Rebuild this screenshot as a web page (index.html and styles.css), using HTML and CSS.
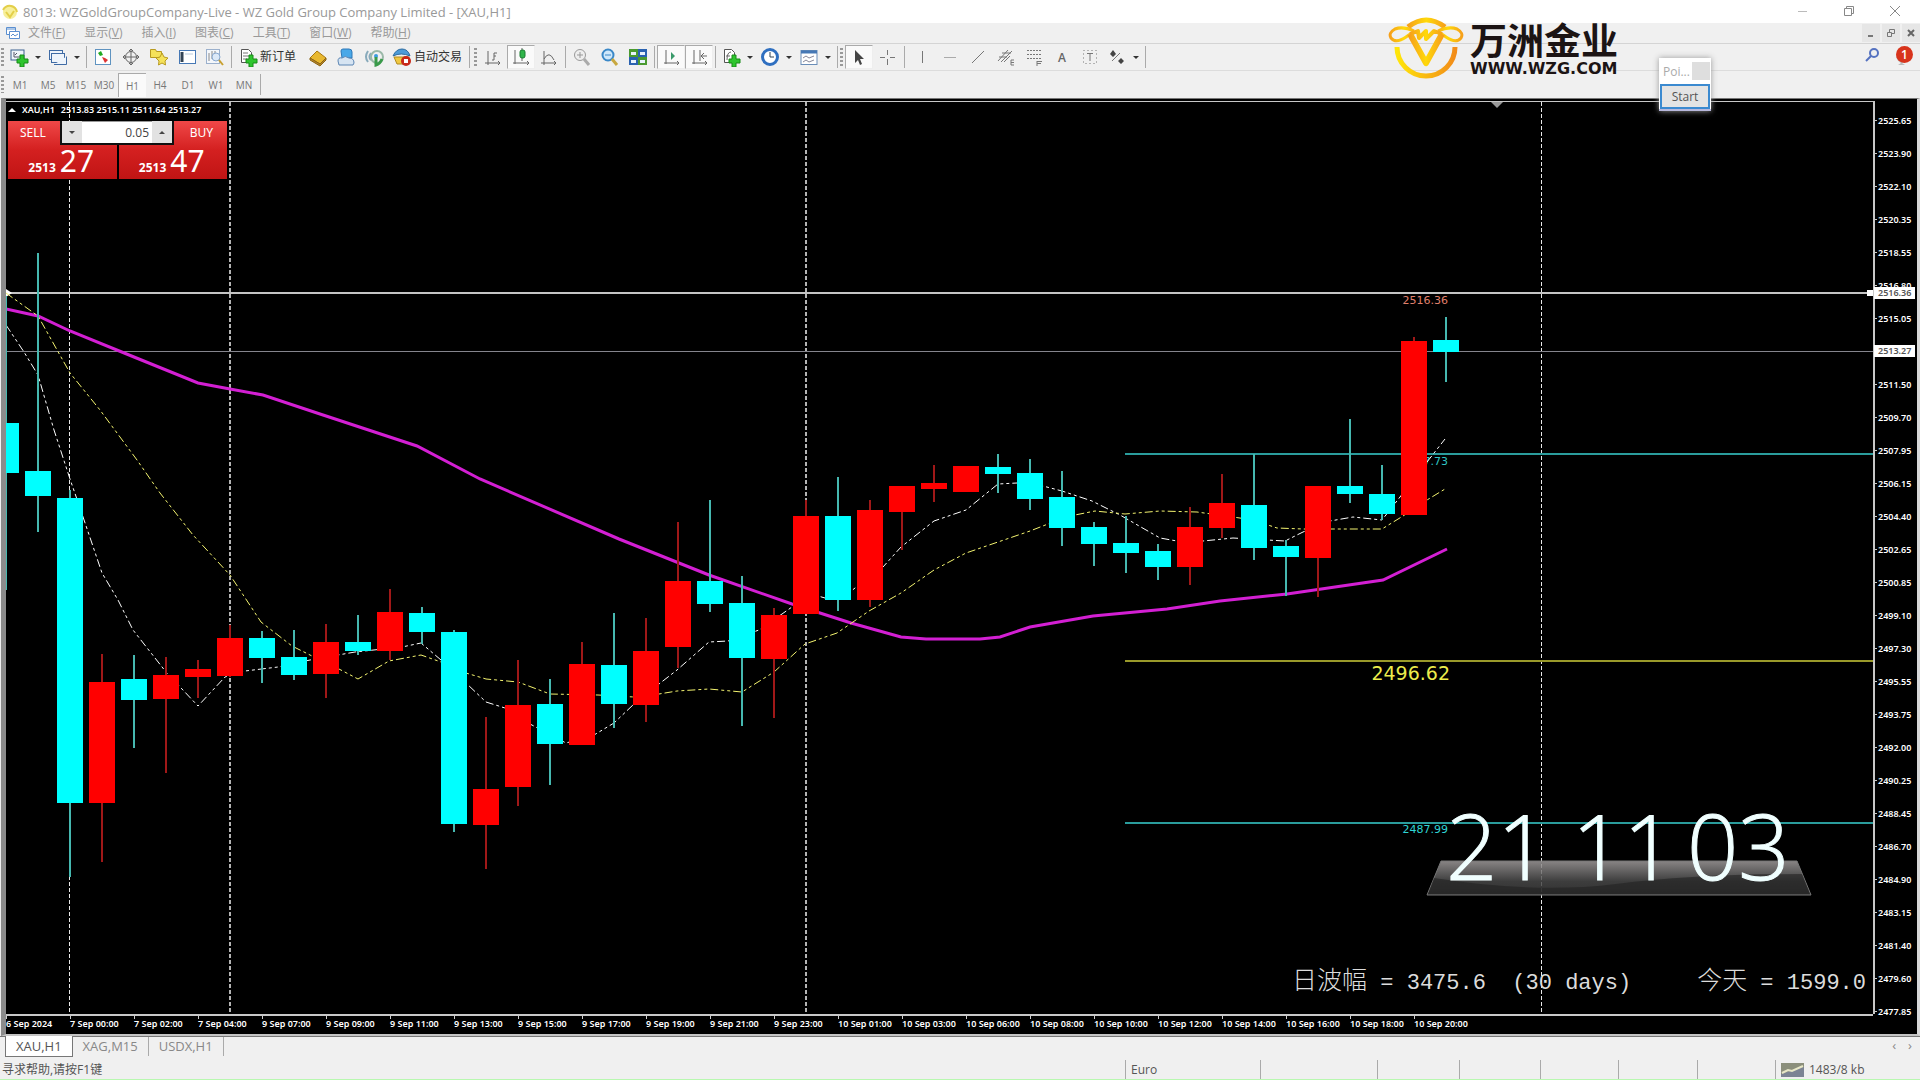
FILE: index.html
```html
<!DOCTYPE html>
<html lang="zh-CN">
<head>
<meta charset="utf-8">
<title>8013: WZGoldGroupCompany-Live - WZ Gold Group Company Limited - [XAU,H1]</title>
<link rel="stylesheet" href="styles.css">
</head>
<body>
<div class="app">
  <header class="titlebar">
    <svg class="app-icon" width="16" height="16" viewBox="0 0 16 16"><circle cx="8" cy="8" r="7" fill="#f7ef9a"/><path d="M1 6q3-5 8-4 5 1 6 6M4 8l4 5 4-6" fill="none" stroke="#e3cf4a" stroke-width="2"/></svg>
    <span class="title-text">8013: WZGoldGroupCompany-Live - WZ Gold Group Company Limited - [XAU,H1]</span>
    <div class="window-buttons">
      <button aria-label="Minimize"><svg width="12" height="12" viewBox="0 0 12 12"><path d="M1 6.500h9" stroke="#bbb"/></svg></button>
      <button aria-label="Restore"><svg width="12" height="12" viewBox="0 0 12 12" fill="none" stroke="#888"><path d="M1.500 3.500h7v7h-7zM3.500 3.500v-2h7v7h-2"/></svg></button>
      <button aria-label="Close"><svg width="12" height="12" viewBox="0 0 12 12"><path d="M1 1l10 10M11 1L1 11" stroke="#888"/></svg></button>
    </div>
  </header>

  <nav class="menubar">
    <svg class="menu-icon" width="16" height="16" viewBox="0 0 16 16" fill="#fff" stroke="#5b8fd0"><path d="M1.500 2.500h9v7h-9zM1 4h10"/><path d="M4.500 6.500h10v7h-10z"/><path d="M6 11l2-2 2 2 3-2" fill="none"/></svg>
    <button>文件(<u>F</u>)</button><button>显示(<u>V</u>)</button><button>插入(<u>I</u>)</button><button>图表(<u>C</u>)</button><button>工具(<u>T</u>)</button><button>窗口(<u>W</u>)</button><button>帮助(<u>H</u>)</button>
    <div class="mdi-buttons">
      <button aria-label="Minimize chart"><svg width="10" height="10" viewBox="0 0 10 10"><path d="M2 8h5" stroke="#777" stroke-width="2"/></svg></button>
      <button aria-label="Restore chart"><svg width="10" height="10" viewBox="0 0 10 10" fill="none" stroke="#777"><path d="M1.500 4.500h4v4h-4zM3.500 4v-2.500h5v4h-2.500"/></svg></button>
      <button aria-label="Close chart"><svg width="10" height="10" viewBox="0 0 10 10"><path d="M2 2l6 6M8 2L2 8" stroke="#666" stroke-width="2"/></svg></button>
    </div>
  </nav>

  <div class="toolbar">
    <i class="grip"></i>
    <button class="split" aria-label="New chart"><svg width="20" height="20" viewBox="0 0 20 20"><rect x="2" y="3" width="13" height="10" fill="#eef4fb" stroke="#3a618f"/><path d="M5 5v5h7M6 8l2-2" stroke="#556" fill="none"/><path d="M11 8h4v4h4v4h-4v4h-4v-4H8v-4h3z" fill="#2ec52e" stroke="#168a16"/></svg><b class="caret"></b></button>
    <button class="split" aria-label="Profiles"><svg width="20" height="20" viewBox="0 0 20 20" fill="#eef4fb" stroke="#3f6ba5"><rect x="1.500" y="3.500" width="13" height="9"/><rect x="3.500" y="6.500" width="13" height="9"/><path d="M6 17.500h12.500v-8"/></svg><b class="caret"></b></button>
    <i class="sep"></i>
    <button aria-label="Market watch"><svg width="20" height="20" viewBox="0 0 20 20"><rect x="2.500" y="2.500" width="15" height="15" fill="#fff" stroke="#5f93c0"/><path d="M5 6l3-2 2 4-3 1z" fill="#2a2"/><path d="M9 10l3 1 3 2-3 3z" fill="#d33"/></svg></button>
    <button aria-label="Data window"><svg width="20" height="20" viewBox="0 0 20 20" fill="none" stroke="#666"><circle cx="10" cy="10" r="5.500"/><path d="M10 2v16M2 10h16M8 4l2-2 2 2M8 16l2 2 2-2M4 8l-2 2 2 2M16 8l2 2-2 2"/></svg></button>
    <button aria-label="Navigator"><svg width="20" height="20" viewBox="0 0 20 20" fill="#f5e25a" stroke="#b89a20"><path d="M1.500 2.500h5l1 2h5v6h-11z"/><path d="M13 6l2 4 4 1-3 3 .5 4-3.500-2-3.500 2 .5-4-3-3 4-1z"/></svg></button>
    <button aria-label="Terminal"><svg width="20" height="20" viewBox="0 0 20 20"><rect x="2.500" y="3.500" width="16" height="13" fill="#fff" stroke="#4678b5"/><path d="M5 5v10" stroke="#345" stroke-width="3"/><path d="M8 7h8" stroke="#bcd" /></svg></button>
    <button aria-label="Strategy tester"><svg width="20" height="20" viewBox="0 0 20 20" fill="none"><rect x="1.500" y="2.500" width="13" height="14" fill="#f4f7fb" stroke="#9bb0cc"/><path d="M4 14V6M7 12V4M10 9V4" stroke="#888"/><circle cx="11" cy="10" r="4" stroke="#88a8d0" fill="#dce9f8"/><path d="M14 13l4 5" stroke="#c8a030" stroke-width="2"/></svg></button>
    <i class="sep"></i>
    <button class="labelled wide-order"><svg width="20" height="20" viewBox="0 0 20 20"><path d="M3.500 2.500h7l3 3v10h-10z" fill="#fff" stroke="#555"/><path d="M5 6h5M5 9h6M5 12h4" stroke="#777"/><path d="M11 8h4v4h4v4h-4v4h-4v-4H8v-4h3z" fill="#2ec52e" stroke="#168a16"/></svg><span>新订单</span></button>
    <button aria-label="MetaEditor"><svg width="20" height="20" viewBox="0 0 20 20"><path d="M2 11l7-7 9 7-6 6z" fill="#e8b830" stroke="#a87810"/><path d="M2 11v2l10 6 6-6v-2l-6 6z" fill="#b8862a" stroke="#8a6414"/></svg></button>
    <button aria-label="Account"><svg width="20" height="20" viewBox="0 0 20 20"><path d="M5 4q0-2 2-2h6q3 0 3 3v6H6z" fill="#49a8e8" stroke="#2f78b8"/><path d="M2 14q0-4 4-3 3-3 7 0 5 0 5 5l-1 2H3z" fill="#d6e4f2" stroke="#5c86b4"/></svg></button>
    <button aria-label="Signals"><svg width="20" height="20" viewBox="0 0 20 20" fill="none"><path d="M4 4q-4 6 0 11M7 6q-3 4 0 7" stroke="#8ab" stroke-width="2"/><circle cx="13" cy="10" r="6" stroke="#9ab8a8" stroke-width="2"/><circle cx="12" cy="9" r="2" fill="#3b9be0"/><path d="M12 10v8q4-1 6-6" stroke="#3a9a4a" stroke-width="3"/></svg></button>
    <button class="labelled wide-auto"><svg width="20" height="20" viewBox="0 0 20 20"><path d="M2 10h15l-2 7H5z" fill="#f0c840" stroke="#b08a20"/><path d="M1 9q8-4 17 0-2-7-8-7T1 9z" fill="#4d9bd8" stroke="#2d6ca0"/><circle cx="14" cy="14" r="5" fill="#c82818"/><rect x="12" y="12" width="4" height="4" fill="#fff"/></svg><span>自动交易</span></button>
    <i class="sep"></i><i class="grip"></i>
    <button aria-label="Bar chart"><svg width="20" height="20" viewBox="0 0 20 20" stroke="#666" fill="none"><path d="M5 4v14M2 16h15M15 14l2 2-2 2M9 13h2V6h3M11 9h2"/></svg></button>
    <button class="on" aria-label="Candlesticks"><svg width="20" height="20" viewBox="0 0 20 20" stroke="#666" fill="none"><path d="M4 3v14M2 16h16M16 14l2 2-2 2M11 1v13"/><rect x="9" y="3" width="5" height="8" rx="2" fill="#2fb44a" stroke="#1b7d30"/></svg></button>
    <button aria-label="Line chart"><svg width="20" height="20" viewBox="0 0 20 20" stroke="#666" fill="none"><path d="M5 4v14M2 16h15M15 14l2 2-2 2M5 12q5-9 10 1"/></svg></button>
    <i class="sep"></i>
    <button aria-label="Zoom in"><svg width="20" height="20" viewBox="0 0 20 20" fill="none" stroke="#999"><circle cx="8" cy="8" r="5.500" fill="#eee"/><path d="M5 8h6M8 5v6"/><path d="M12 12l5 6" stroke="#aaa" stroke-width="3"/></svg></button>
    <button aria-label="Zoom out"><svg width="20" height="20" viewBox="0 0 20 20" fill="none" stroke="#3a88c8"><circle cx="8" cy="8" r="5.500" fill="#cfe8fb" stroke-width="2"/><path d="M5 8h6"/><path d="M12 12l5 6" stroke="#c8a840" stroke-width="3"/></svg></button>
    <button aria-label="Tile windows"><svg width="20" height="20" viewBox="0 0 20 20"><path d="M1 2h9v8H1zM10 10h9v8h-9z" fill="#4a9a30"/><path d="M10 2h9v8h-9zM1 10h9v8H1z" fill="#2a62b0"/><path d="M3 5h5v3H3zM12 5h5v3h-5zM3 13h5v3H3zM12 13h5v3h-5z" fill="#e8f2fb"/></svg></button>
    <i class="sep"></i>
    <button class="on" aria-label="Auto scroll"><svg width="20" height="20" viewBox="0 0 20 20" stroke="#666" fill="none"><path d="M5 3v14M3 16h15M16 14l2 2-2 2"/><path d="M10 5l4 4-4 4z" fill="#3a9a6a" stroke="none"/></svg></button>
    <button class="on" aria-label="Chart shift"><svg width="20" height="20" viewBox="0 0 20 20" stroke="#666" fill="none"><path d="M5 3v14M3 16h15M16 14l2 2-2 2M11 3v11M12 9h6M15 6l-3 3 3 3"/></svg></button>
    <i class="sep"></i>
    <button class="split" aria-label="Indicators"><svg width="20" height="20" viewBox="0 0 20 20"><path d="M3.500 2.500h7l3 3v10h-10z" fill="#fff" stroke="#555"/><path d="M6 13q0-8 4-8M5 9h4" stroke="#666" fill="none"/><path d="M11 8h4v4h4v4h-4v4h-4v-4H8v-4h3z" fill="#2ec52e" stroke="#168a16"/></svg><b class="caret"></b></button>
    <button class="split" aria-label="Periods"><svg width="20" height="20" viewBox="0 0 20 20"><circle cx="10" cy="10" r="7.500" fill="#fff" stroke="#2f6fc0" stroke-width="3"/><path d="M10 5v5h4" stroke="#345" fill="none"/></svg><b class="caret"></b></button>
    <button class="split" aria-label="Templates"><svg width="20" height="20" viewBox="0 0 20 20" fill="none"><rect x="2" y="3.500" width="16" height="14" fill="#fff" stroke="#6a8db8"/><path d="M2 5h16" stroke="#4678b5" stroke-width="3"/><path d="M4 11l3-2 3 2 5-2M4 15l3-2 3 2 5-2" stroke="#889"/></svg><b class="caret"></b></button>
    <i class="sep"></i><i class="grip tight"></i>
    <button class="on" aria-label="Cursor"><svg width="20" height="20" viewBox="0 0 20 20"><path d="M6 3l9 9h-4l2 5-2 1-2-5-3 3z" fill="#444"/></svg></button>
    <button aria-label="Crosshair"><svg width="20" height="20" viewBox="0 0 20 20"><path d="M10.500 3v5M10.500 12v6M3 10.500h5M13 10.500h5" stroke="#777"/></svg></button>
    <i class="sep wide"></i>
    <button aria-label="Vertical line"><svg width="20" height="20" viewBox="0 0 20 20"><path d="M10.500 4v12" stroke="#777"/></svg></button>
    <button aria-label="Horizontal line"><svg width="20" height="20" viewBox="0 0 20 20"><path d="M4 10.500h12" stroke="#aaa"/></svg></button>
    <button aria-label="Trend line"><svg width="20" height="20" viewBox="0 0 20 20"><path d="M4 16L16 4" stroke="#777"/></svg></button>
    <button aria-label="Channel"><svg width="20" height="20" viewBox="0 0 20 20" stroke="#777" fill="none"><path d="M2 14L12 3M5 15L16 4M3 10h8M6 6h9M8 15l6-6M15 13h3M15 13v5h3M15 15.500h3"/></svg></button>
    <button aria-label="Fibonacci"><svg width="20" height="20" viewBox="0 0 20 20" stroke="#777" fill="none"><path d="M3 3.500h14M3 7.500h14M3 11.500h14" stroke-dasharray="2 1"/><path d="M13 14.500h5M13 14v5M13 16.500h4"/></svg></button>
    <button class="glyph" aria-label="Text">A</button>
    <button aria-label="Text label"><svg width="20" height="20" viewBox="0 0 20 20" stroke="#777" fill="none"><rect x="3.500" y="3.500" width="13" height="13" stroke-dasharray="1 3"/><path d="M7 6.500h6M10 6v8"/></svg></button>
    <button class="split" aria-label="Arrows"><svg width="20" height="20" viewBox="0 0 20 20" fill="#444"><path d="M3 7l3-4 3 4-3 3zM11 14l3-3 3 3-3 3z"/><path d="M5 14l8-8" stroke="#777"/></svg><b class="caret"></b></button>
    <i class="sep"></i>
    <div class="toolbar-right">
      <button aria-label="Search"><svg width="16" height="16" viewBox="0 0 16 16" fill="none" stroke="#5572c0" stroke-width="2"><circle cx="9" cy="6" r="4"/><path d="M6 9l-5 5"/></svg></button>
      <button class="alerts" aria-label="Notifications"><svg width="16" height="18" viewBox="0 0 16 18"><path d="M1 8q6 6 12 3-3 4-6 4l3 2H3l3-2Q2 13 1 8z" fill="#bbb"/></svg><span class="badge">1</span></button>
    </div>
  </div>

  <div class="timeframes">
    <i class="grip"></i>
    <button>M1</button><button>M5</button><button>M15</button><button>M30</button><button class="on">H1</button><button>H4</button><button>D1</button><button>W1</button><button>MN</button>
    <i class="sep"></i>
  </div>

  <main class="chart">
    <section class="plot">
      <svg class="plot-canvas" viewBox="6 102 1867 912" preserveAspectRatio="none">
        <path class="day-line thin" d="M69.500 102V1014M1541.500 102V1014"/>
        <path class="day-line" d="M230 102V1014M806 102V1014"/>
        <path class="line-high" d="M6 293H1873"/>
        <path class="line-price" d="M6 351.500H1873"/>
        <path class="line-cyan" d="M1125 454H1873M1125 823H1873"/>
        <path class="line-yellow" d="M1125 661H1873"/>
        <path d="M6 289l6 4-6 4zM1867 290h6v6h-6z" fill="#fff"/>
        <path d="M1491 102h12l-6 6z" fill="#999"/>
        <g class="level-text" text-anchor="end">
          <text x="1448" y="304" fill="#e0806c">2516.36</text>
          <text x="1448" y="465" fill="#2fc4c4">2507.73</text>
          <text x="1450" y="680" class="level-big">2496.62</text>
          <text x="1448" y="833" fill="#2fd4d4">2487.99</text>
        </g>
        <polyline class="ma-slow" points="6,309 38,316 70,331 134,357 198,383 230,389 263,395 320,414 417,446 480,479 619,539 709,575 792,604 851,623 901,637 926,639 980,639 1000,637 1030,627 1093,616 1167,609 1220,601 1287,594 1383,580 1447,549"/>
        <polyline class="ma-fast" points="6,325 24,352 38,375 54,430 70,479 80,508 102,573 118,600 133,630 166,672 198,706 225,677 245,671 278,667 310,660 355,652 402,647 421,643 441,660 466,683 486,702 505,708 530,724 566,743 594,735 614,723 634,704 659,684 677,670 709,642 728,641 759,630 782,614 792,607 818,596 825,598 850,592 855,588 883,567 901,547 934,521 966,510 998,484 1017,483 1043,486 1062,491 1092,501 1120,515 1160,538 1177,541 1203,541 1233,538 1267,540 1285,541 1303,532 1330,521 1353,517 1382,520 1400,497 1427,462 1445,439"/>
        <polyline class="ma-mid" points="6,293 38,316 70,373 100,410 137,460 160,493 193,535 230,575 261,622 292,646 314,657 339,669 358,679 389,661 421,655 441,662 466,673 486,679 518,682 550,694 598,695 634,697 659,694 677,691 709,689 742,692 774,672 805,644 837,633 869,611 901,593 934,570 966,553 998,542 1030,531 1048,524 1075,515 1095,511 1125,514 1160,511 1197,512 1233,517 1253,520 1277,528 1303,529 1382,529 1403,516 1427,500 1445,489"/>
        <g id="candles"></g>
      </svg>

      <div class="chart-title"><i class="collapse"></i><span>XAU,H1</span><span>2513.83 2515.11 2511.64 2513.27</span></div>

      <div class="trade">
        <button class="quote"><span class="side">SELL</span><span class="price"><small>2513</small>27</span></button>
        <button class="quote buy"><span class="side">BUY</span><span class="price"><small>2513</small>47</span></button>
        <div class="volume">
          <button aria-label="Decrease volume"><i class="down"></i></button>
          <input type="text" value="0.05" aria-label="Volume">
          <button aria-label="Increase volume"><i class="up"></i></button>
        </div>
      </div>

      <div class="clock">
        <svg class="clock-base" width="386" height="36" viewBox="0 0 386 36">
          <defs><linearGradient id="glass" x2="0" y2="1"><stop offset="0" stop-color="#a09c9c" stop-opacity=".85"/><stop offset=".6" stop-color="#484848" stop-opacity=".85"/><stop offset="1" stop-color="#3a3a3a" stop-opacity=".85"/></linearGradient></defs>
          <path d="M15 1H371L385 35H1z" fill="url(#glass)" stroke="#777"/>
          <path d="M8 18Q110 34 190 24T376 14L384 34H2z" fill="#222" opacity=".6"/>
        </svg>
        <time class="clock-digits"><span>21</span><span>11</span><span>03</span></time>
      </div>

      <p class="range"><span class="cjk">日波幅</span> = 3475.6  (30 days)     <span class="cjk">今天</span> = 1599.0</p>
    </section>

    <div class="price-axis">
      <ol id="prices"></ol>
      <output class="tag tag-high">2516.36</output>
      <output class="tag tag-price">2513.27</output>
    </div>
    <ol class="time-axis" id="times"></ol>
  </main>

  <nav class="tabs">
    <a class="current" href="#xau">XAU,H1</a><a href="#xag">XAG,M15</a><a href="#usdx">USDX,H1</a>
    <div class="tab-scroll"><button aria-label="Previous">‹</button><button aria-label="Next">›</button></div>
  </nav>

  <footer class="status">
    <span class="cell help">寻求帮助,请按F1键</span><span class="cell">Euro</span><span class="cell"></span><span class="cell"></span><span class="cell"></span><span class="cell"></span><span class="cell"></span><span class="cell"></span>
    <span class="cell"><svg width="23" height="14" viewBox="0 0 23 14"><path d="M0 0h23v14H0z" fill="#8b8f7c"/><path d="M0 14V11L23 4v10z" fill="#7c8494"/><path d="M1 10l6-3 4 1 11-5" stroke="#e8e8c8" stroke-width="2" fill="none"/></svg>1483/8 kb</span>
  </footer>

  <div class="brand">
    <svg width="76" height="62" viewBox="0 0 76 62" fill="none" stroke-linejoin="round">
      <defs><linearGradient id="gold"><stop offset="0" stop-color="#ffe60a"/><stop offset="1" stop-color="#f28c18"/></linearGradient>
      <linearGradient id="gold2"><stop offset="0" stop-color="#f6a01a"/><stop offset=".5" stop-color="#ffd90a"/><stop offset="1" stop-color="#f6a01a"/></linearGradient></defs>
      <path d="M20 10Q38-4 57 10" stroke="url(#gold2)" stroke-width="5"/>
      <path d="M9 30A29 29 0 0 0 67 30" stroke="url(#gold)" stroke-width="5"/>
      <path d="M26 14Q15 9 7 12Q0 16 3 21Q8 27 18 20Q24 15 30 15" stroke="url(#gold2)" stroke-width="3"/>
      <path d="M50 14Q61 9 69 12Q76 16 73 21Q68 27 58 20Q52 15 46 15" stroke="url(#gold2)" stroke-width="3"/>
      <path d="M22 17L38 46L54 17" stroke="url(#gold2)" stroke-width="6"/>
      <path d="M22 17L30 14L31 21L38 14L38 22L46 14L54 17" stroke="url(#gold2)" stroke-width="4"/>
    </svg>
    <div class="brand-text"><strong>万洲金业</strong><span>WWW.WZG.COM</span></div>
  </div>

  <aside class="pointer-window">
    <div class="pointer-title"><span>Poi...</span><i></i></div>
    <button>Start</button>
  </aside>
</div>
<script src="script.js"></script>
</body>
</html>
```
FILE: styles.css
```css
* { box-sizing: border-box; }
body { margin: 0; background: #f0f0f0; color: #555; font-family: "Open Sans", "Noto Sans CJK SC", sans-serif; font-size: 13px; }
button { margin: 0; padding: 0; border: 0; background: none; font: inherit; color: inherit; }
ol { list-style: none; margin: 0; padding: 0; }
.app { position: relative; display: flex; flex-direction: column; min-height: 100vh; }

.titlebar { display: flex; align-items: center; height: 23px; padding: 0 2px; background: #fff; color: #999; }
.app-icon { margin-right: 5px; }
.window-buttons { display: flex; margin-left: auto; padding-bottom: 2px; }
.window-buttons button { width: 46px; height: 20px; display: grid; place-items: center; }

.menubar { display: flex; align-items: center; height: 20px; padding-left: 5px; color: #999; font-size: 12px; }
.menu-icon { margin-right: 7px; }
.menubar > button { margin-right: 19px; line-height: 20px; }
.mdi-buttons { display: flex; gap: 2px; margin-left: auto; }
.mdi-buttons button { width: 18px; height: 18px; background: #e6e6e6; display: grid; place-items: center; }

.toolbar, .timeframes { display: flex; align-items: stretch; }
.toolbar { height: 28px; border-top: 1px solid #d4d4d4; border-bottom: 1px solid #dcdcdc; padding: 1px 0; color: #333; font-size: 12px; }
.toolbar > button { width: 28px; display: flex; align-items: center; justify-content: center; }
.toolbar > .split { width: 39px; justify-content: flex-start; padding-left: 3px; }
.toolbar > .labelled { justify-content: flex-start; gap: 2px; padding-left: 4px; white-space: nowrap; line-height: 20px; }
.toolbar > .wide-order { width: 70px; }
.toolbar > .wide-auto { width: 79px; }
.toolbar > .on { background: #fafafa; border: 1px solid #aaa; border-right-color: #eee; border-bottom-color: #eee; }
.toolbar > .glyph { font-weight: 600; color: #666; }
.caret { margin-left: 6px; border: 3px solid transparent; border-top: 3px solid #333; border-bottom: 0; }
.grip { width: 3px; margin: 3px 2px 3px 2px; background: repeating-linear-gradient(#999 0 2px, transparent 2px 4px); }
.timeframes .grip, .toolbar .grip:first-child { margin-left: 1px; }
.grip.tight { margin-left: 0; }
.sep { width: 1px; margin: 1px 2px; background: #aaa; }
.sep.wide { margin: 1px 3px; }
.toolbar-right { display: flex; align-items: center; gap: 14px; margin-left: auto; padding-right: 7px; }
.alerts { position: relative; width: 18px; display: flex; align-items: flex-end; }
.badge { position: absolute; top: -2px; right: 0; width: 17px; height: 17px; border-radius: 50%; background: #d8341c; color: #fff; font-size: 12px; line-height: 17px; font-weight: 600; }

.timeframes { height: 27px; padding: 2px 0; font-size: 10px; color: #777; }
.timeframes button { width: 28px; height: 24px; }
.timeframes .on { background: #fafafa; border: 1px solid #aaa; border-right: 0; border-bottom: 0; }

.chart { flex: 1; display: grid; grid-template-columns: 1fr 42px; grid-template-rows: 1fr 20px; margin: 0 0 0 1px; padding-top: 2px; border: solid #777; border-width: 1px 3px 2px 5px; border-color: #777 #d8d8d8 #c4c4c4 #8c8c8c; background: #000; color: #fff; font: 600 9px/12px "Noto Sans", sans-serif; }
.plot { position: relative; min-width: 0; border: solid #c8c8c8; border-width: 1px 2px 0 0; }
.plot-canvas { position: absolute; inset: 0; width: 100%; height: 100%; }
.day-line { stroke: #b4b4b4; stroke-width: 2; stroke-dasharray: 4 2; }
.day-line.thin { stroke: #e8e8e8; stroke-width: 1; }
.line-high { stroke: #c4c4c4; stroke-width: 2; }
.line-price { stroke: #85858d; }
.line-cyan { stroke: #2a9c9c; stroke-width: 2; }
.line-yellow { stroke: #99992a; stroke-width: 2; }
.level-text { font: 11px "DejaVu Sans", sans-serif; }
.level-big { font-size: 19px; fill: #ecec4c; }
.ma-slow, .ma-mid, .ma-fast { fill: none; }
.ma-slow { stroke: #d31fd3; stroke-width: 3; }
.ma-mid { stroke: #f4f470; stroke-dasharray: 8 3 3 3 3 3; }
.ma-fast { stroke: #fff; stroke-dasharray: 8 3 3 3 3 3; }
.bear-wick { stroke: #46b8b0; stroke-width: 2; }
.bull-wick { stroke: #a01818; stroke-width: 2; }
.bear-body { fill: #0ff; }
.bull-body { fill: #f00; }

.chart-title { position: absolute; top: 2px; left: 2px; display: flex; align-items: center; gap: 6px; }
.collapse { border: 4px solid transparent; border-bottom-color: #fff; border-top: 0; }

.trade { position: absolute; top: 19px; left: 2px; display: grid; grid-template-columns: 1fr 1fr; grid-template-rows: 58px; gap: 2px; width: 219px; }
.quote { display: flex; flex-direction: column; justify-content: space-between; padding: 3px 14px 2px 12px; background: linear-gradient(#f04848, #d42020 50%, #c01414); color: #fff; text-align: left; font-size: 12px; font-weight: 400; line-height: 18px; }
.quote.buy .side { align-self: flex-end; }
.quote .price { align-self: center; font-size: 30px; line-height: 32px; }
.quote small { margin-right: 4px; font-size: 12px; line-height: 12px; font-weight: 700; }
.volume { position: absolute; left: 52px; top: 0; width: 114px; height: 24px; display: grid; grid-template-columns: 20px 1fr 20px; border: solid #111; border-width: 0 2px 2px; background: #fff; }
.volume button { display: grid; place-items: center; background: #e2e2e2; }
.volume input { width: 100%; min-width: 0; margin: 0; padding: 0 3px; border: 0; border-top: 1px solid #999; background: #fff; color: #444; text-align: right; font: 12px "Open Sans", sans-serif; }
.up, .down { border: 3px solid transparent; }
.up { border-bottom-color: #444; border-top: 0; }
.down { border-top-color: #444; border-bottom: 0; }

.clock { position: absolute; right: 61px; bottom: 118px; width: 386px; height: 86px; }
.clock-base { position: absolute; left: 0; bottom: 0; }
.clock-digits { position: absolute; left: 20px; top: -15px; display: grid; grid-template-columns: 126px 115px auto; color: #f0ffff; font: 300 90px/100px "Open Sans", sans-serif; -webkit-text-stroke: 1px #f0ffff; }

.range { position: absolute; right: 7px; bottom: 15px; margin: 0; white-space: pre; color: #dcdcdc; font: 22px/30px "Liberation Mono", monospace; }
.cjk { font: 300 25px/30px "Noto Sans CJK SC", sans-serif; }

.price-axis { position: relative; grid-row: 1 / 3; grid-column: 2; }
.price-axis ol { display: flex; flex-direction: column; height: 100%; padding: 3px 0 6px; }
.price-axis li { flex: 1; display: flex; align-items: center; gap: 1px; }
.price-axis li::before { content: ""; width: 2px; height: 1px; background: #ccc; }
.tag { position: absolute; left: -1px; width: 41px; padding-left: 4px; background: #fff; color: #555; }
.tag-high { top: 186px; }
.tag-price { top: 244px; }
.time-axis { display: grid; grid-auto-flow: column; grid-auto-columns: 64px; justify-content: start; overflow: hidden; border-top: 2px solid #c8c8c8; margin-right: 2px; line-height: 16px; white-space: nowrap; }
.time-axis li { position: relative; }
.time-axis li::before { content: ""; position: absolute; left: 0; top: 0; width: 1px; height: 3px; background: #ccc; }

.tabs { display: flex; align-items: flex-start; height: 22px; padding-left: 5px; border-top: 1px solid #777; color: #888; line-height: 19px; }
.tabs a { padding: 0 10px; color: inherit; text-decoration: none; border-right: 1px solid #aaa; }
.tabs .current { margin-top: -1px; padding: 1px 10px 0; background: #fff; color: #555; border: 1px solid #777; border-top: 0; }
.tab-scroll { display: flex; gap: 12px; margin-left: auto; padding-right: 8px; }
.tab-scroll button { line-height: 16px; }

.status { display: grid; grid-template-columns: 1fr 135px 117px 82px 81px 78px 79px 78px 145px; height: 22px; padding-top: 2px; border-bottom: 1px solid #b8f8b0; line-height: 18px; font-size: 12px; }
.cell { display: flex; align-items: center; gap: 5px; padding-left: 5px; border-left: 1px solid #aaa; }
.cell.help { padding-left: 2px; border: 0; }

.brand { position: absolute; top: 17px; left: 1388px; display: flex; gap: 6px; color: #1c1414; white-space: nowrap; }
.brand-text { display: flex; flex-direction: column; }
.brand strong { font: 700 37px/44px "Noto Sans CJK SC", sans-serif; }
.brand span { font: 700 16px/16px "DejaVu Sans", sans-serif; }
.pointer-window { position: absolute; top: 58px; left: 1659px; width: 52px; background: #fff; border-bottom: 2px solid #b8b8dc; box-shadow: 0 0 6px #999; }
.pointer-title { display: flex; align-items: center; justify-content: space-between; height: 26px; padding: 0 1px 0 4px; color: #aaa; font-size: 12px; }
.pointer-title i { width: 18px; height: 18px; background: #dedede; }
.pointer-window button { display: block; width: 50px; height: 25px; margin: 0 1px; border: 2px solid #3b8ad0; background: #e4e4e4; font-size: 12px; line-height: 20px; }
```
FILE: script.js
```js
// Each candle: [high, body top, body bottom, low, direction], in canvas units; "u" closed up, "d" closed down.
const candles = [
  [296,423,473,590,"d"],[253,471,496,532,"d"],[490,498,803,877,"d"],[654,682,803,862,"u"],[655,679,700,748,"d"],
  [657,675,699,773,"u"],[660,669,677,698,"u"],[625,638,676,677,"u"],[631,638,658,683,"d"],[630,657,675,680,"d"],
  [624,642,674,698,"u"],[615,642,651,655,"d"],[589,612,651,660,"u"],[607,613,632,644,"d"],[630,632,824,832,"d"],
  [717,789,825,869,"u"],[660,705,787,806,"u"],[679,704,744,785,"d"],[642,664,745,745,"u"],[613,665,704,728,"d"],
  [618,651,705,722,"u"],[522,581,647,668,"u"],[500,581,604,612,"d"],[576,603,658,726,"d"],[608,615,659,718,"u"],
  [500,516,614,614,"u"],[477,516,600,611,"d"],[500,510,600,607,"u"],[486,486,512,550,"u"],[465,483,489,502,"u"],
  [466,466,492,492,"u"],[454,467,474,493,"d"],[459,473,499,510,"d"],[471,497,528,546,"d"],[522,527,544,566,"d"],
  [516,543,553,573,"d"],[544,551,567,580,"d"],[507,527,567,585,"u"],[474,503,528,538,"u"],[454,505,548,560,"d"],
  [540,546,557,596,"d"],[486,486,558,597,"u"],[419,486,494,503,"d"],[465,494,514,520,"d"],[337,341,515,515,"u"],
  [317,340,352,382,"d"]
];
document.getElementById("candles").innerHTML = candles.map(([high, top, bottom, low, dir], i) => {
  const x = 6 + 32 * i;
  const kind = dir === "u" ? "bull" : "bear";
  return `<path class="${kind}-wick" d="M${x} ${high}V${low}"/><rect class="${kind}-body" x="${x - 13}" y="${top}" width="26" height="${bottom - top}"/>`;
}).join("");

const prices = ["2525.65","2523.90","2522.10","2520.35","2518.55","2516.80","2515.05","2513.25","2511.50","2509.70","2507.95","2506.15","2504.40","2502.65","2500.85","2499.10","2497.30","2495.55","2493.75","2492.00","2490.25","2488.45","2486.70","2484.90","2483.15","2481.40","2479.60","2477.85"];
document.getElementById("prices").innerHTML = prices.map(p => `<li>${p}</li>`).join("");

const times = ["6 Sep 2024","7 Sep 00:00","7 Sep 02:00","7 Sep 04:00","9 Sep 07:00","9 Sep 09:00","9 Sep 11:00","9 Sep 13:00","9 Sep 15:00","9 Sep 17:00","9 Sep 19:00","9 Sep 21:00","9 Sep 23:00","10 Sep 01:00","10 Sep 03:00","10 Sep 06:00","10 Sep 08:00","10 Sep 10:00","10 Sep 12:00","10 Sep 14:00","10 Sep 16:00","10 Sep 18:00","10 Sep 20:00"];
document.getElementById("times").innerHTML = times.map(t => `<li>${t}</li>`).join("");
```
